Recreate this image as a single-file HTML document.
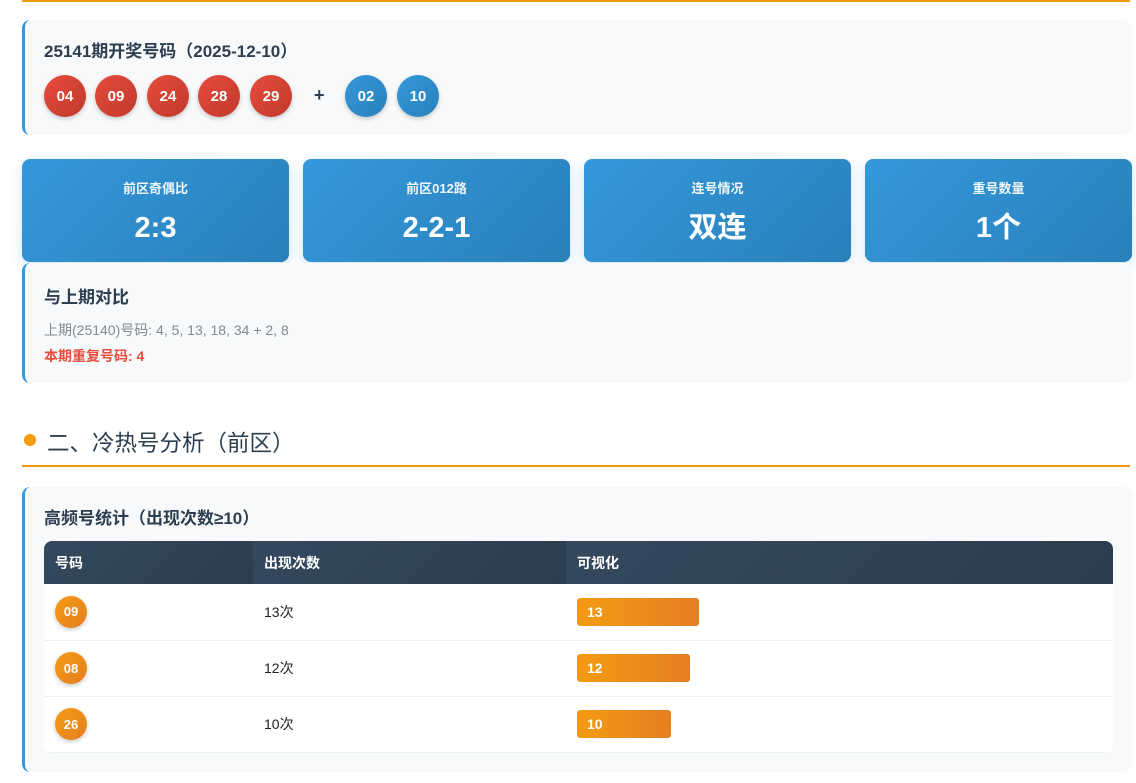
<!DOCTYPE html>
<html><head><meta charset="utf-8"><style>
*{margin:0;padding:0;box-sizing:border-box}
body{width:1136px;height:783px;overflow:hidden;background:#fff;font-family:"Liberation Sans","Noto Sans CJK SC",sans-serif;color:#2c3e50;position:relative}
.abs{position:absolute}
.topline{left:22px;top:0;width:1108px;height:2px;background:#f39c12}
.card{position:absolute;left:22px;width:1110px;background:#f8f9fa;border-left:3px solid #3498db;border-radius:8px}
.t{position:absolute;left:19px;font-size:17px;font-weight:bold;color:#2c3e50}
.ball{position:absolute;width:42px;height:42px;border-radius:50%;color:#fff;font-weight:bold;font-size:15px;display:flex;align-items:center;justify-content:center;box-shadow:0 2px 5px rgba(0,0,0,.2)}
.r{background:linear-gradient(135deg,#e74c3c,#c0392b)}
.b{background:linear-gradient(135deg,#3498db,#2980b9)}
.stat{position:absolute;top:159px;width:267px;height:103px;border-radius:8px;background:linear-gradient(135deg,#3498db,#2980b9);color:#fff;text-align:center;box-shadow:0 4px 12px rgba(52,152,219,.25)}
.stat .l{position:absolute;top:19px;left:0;right:0;font-size:13px;font-weight:bold;opacity:.92}
.stat .v{position:absolute;top:51px;left:0;right:0;height:36px;line-height:36px;font-size:29px;font-weight:bold}
table{position:absolute;left:19px;top:54px;width:1069px;border-collapse:collapse;background:#fff;border-radius:8px;overflow:hidden}
th{height:43px;background:linear-gradient(135deg,#34495e,#2c3e50);color:#fff;text-align:left;font-size:14px;padding-left:11px}
td{height:56px;border-bottom:1px solid #ecf0f1;font-size:14px;padding-left:11px;color:#222}
.ob{width:32px;height:32px;border-radius:50%;background:linear-gradient(135deg,#f39c12,#e67e22);color:#fff;font-weight:bold;font-size:13px;display:flex;align-items:center;justify-content:center;box-shadow:0 2px 4px rgba(0,0,0,.2)}
.bar{height:28px;border-radius:3px;background:linear-gradient(90deg,#f39c12,#e67e22);color:#fff;font-weight:bold;font-size:14px;line-height:28px;padding-left:10px}
</style></head><body>
<div class="abs topline"></div>
<div class="card" style="top:20px;height:115px">
<div class="t" style="top:17px">25141期开奖号码（2025-12-10）</div>
<div class="ball r" style="left:19px;top:55px">04</div>
<div class="ball r" style="left:70px;top:55px">09</div>
<div class="ball r" style="left:122px;top:55px">24</div>
<div class="ball r" style="left:173px;top:55px">28</div>
<div class="ball r" style="left:225px;top:55px">29</div>
<div class="abs" style="left:289px;top:65px;font-size:18px;font-weight:bold">+</div>
<div class="ball b" style="left:320px;top:55px">02</div>
<div class="ball b" style="left:372px;top:55px">10</div>
</div>
<div class="stat" style="left:22px"><div class="l">前区奇偶比</div><div class="v">2:3</div></div>
<div class="stat" style="left:303px"><div class="l">前区012路</div><div class="v">2-2-1</div></div>
<div class="stat" style="left:584px"><div class="l">连号情况</div><div class="v">双连</div></div>
<div class="stat" style="left:865px"><div class="l">重号数量</div><div class="v">1个</div></div>
<div class="card" style="top:263px;height:120px">
<div class="t" style="top:20px">与上期对比</div>
<div class="abs" style="left:19px;top:57px;font-size:14px;color:#7f8c8d">上期(25140)号码: 4, 5, 13, 18, 34 + 2, 8</div>
<div class="abs" style="left:19px;top:83px;font-size:14px;color:#e74c3c;font-weight:bold">本期重复号码: 4</div>
</div>
<div class="abs" style="left:24px;top:434px;width:12px;height:12px;border-radius:50%;background:#f39c12"></div>
<div class="abs" style="left:47px;top:426px;font-size:22.5px;color:#2c3e50">二、冷热号分析（前区）</div>
<div class="abs" style="left:22px;top:465px;width:1108px;height:2px;background:#f39c12"></div>
<div class="card" style="top:487px;height:285px">
<div class="t" style="top:17px">高频号统计（出现次数≥10）</div>
<table>
<tr><th style="width:209px">号码</th><th style="width:313px">出现次数</th><th>可视化</th></tr>
<tr><td><div class="ob">09</div></td><td>13次</td><td><div class="bar" style="width:122px">13</div></td></tr>
<tr><td><div class="ob">08</div></td><td>12次</td><td><div class="bar" style="width:113px">12</div></td></tr>
<tr><td><div class="ob">26</div></td><td>10次</td><td><div class="bar" style="width:94px">10</div></td></tr>
</table>
</div>
</body></html>
